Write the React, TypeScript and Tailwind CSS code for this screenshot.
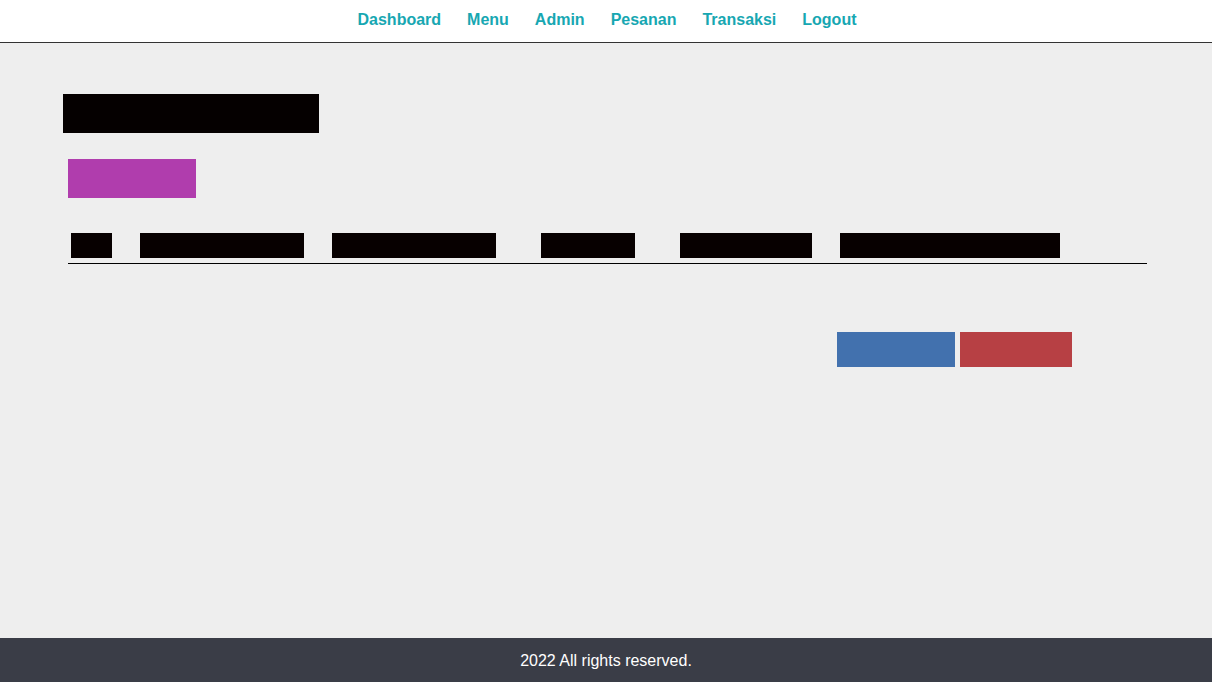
import React from "react";

const links = ["Dashboard", "Menu", "Admin", "Pesanan", "Transaksi", "Logout"];

export default function App() {
    return (
        <div className="min-h-screen flex flex-col bg-[#eeeeee]" style={{ fontFamily: '"Liberation Sans", Arial, sans-serif' }}>
            <header className="h-[43px] bg-white border-b border-[#333333] flex items-center justify-center">
                <nav className="flex gap-[26px] pl-[2px] pb-[2px]">
                    {links.map((l) => (
                        <a key={l} href="#" className="text-[16px] font-bold text-[#17a7b2]">{l}</a>
                    ))}
                </nav>
            </header>

            <main className="flex-1 pl-[63px] pt-[51px]">
                <div className="w-[256px] h-[39px] bg-[#050000]"></div>
                <div className="ml-[5px] mt-[26px] w-[128px] h-[39px] bg-[#b03dad]"></div>

                <div className="ml-[5px] mt-[35px] w-[1079px]">
                    <div className="flex h-[25px]">
                        <div className="ml-[3px] w-[41px] bg-[#070000]"></div>
                        <div className="ml-[28px] w-[164px] bg-[#070000]"></div>
                        <div className="ml-[28px] w-[164px] bg-[#070000]"></div>
                        <div className="ml-[45px] w-[94px] bg-[#070000]"></div>
                        <div className="ml-[45px] w-[132px] bg-[#070000]"></div>
                        <div className="ml-[28px] w-[220px] bg-[#070000]"></div>
                    </div>
                    <div className="mt-[5px] h-px bg-black"></div>

                    <div className="flex mt-[68px] ml-[769px] gap-[5px]">
                        <button className="w-[118px] h-[35px] bg-[#4271ae]"></button>
                        <button className="w-[112px] h-[35px] bg-[#b74044]"></button>
                    </div>
                </div>
            </main>

            <footer className="h-[44px] bg-[#3a3d47] flex items-center justify-center">
                <p className="text-white text-[16px] pt-[2px]">2022 All rights reserved.</p>
            </footer>
        </div>
    );
}
